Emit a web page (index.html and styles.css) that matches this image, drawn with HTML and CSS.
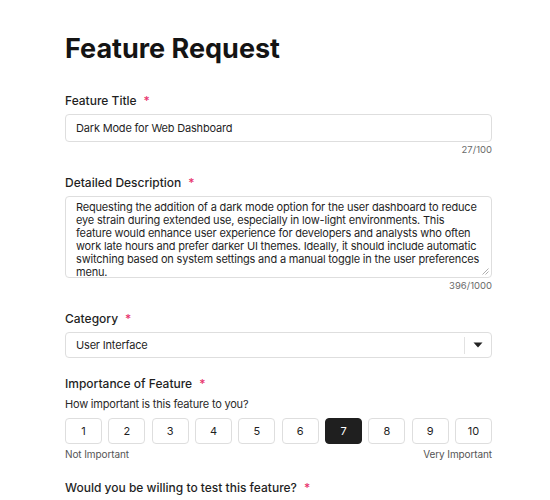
FILE: index.html
```html
<!DOCTYPE html>
<html lang="en">
<head>
<meta charset="utf-8">
<title>Feature Request</title>
<link rel="stylesheet" href="styles.css">
</head>
<body>
<main class="form">
  <h1 class="title">Feature Request</h1>

  <div class="field">
    <label class="label">Feature Title <span class="req">*</span></label>
    <div class="input">Dark Mode for Web Dashboard</div>
    <div class="count">27/100</div>
  </div>

  <div class="field">
    <label class="label">Detailed Description <span class="req">*</span></label>
    <div class="textarea">Requesting the addition of a dark mode option for the user dashboard to reduce eye strain during extended use, especially in low-light environments. This feature would enhance user experience for developers and analysts who often work late hours and prefer darker UI themes. Ideally, it should include automatic switching based on system settings and a manual toggle in the user preferences menu.<svg class="grip" width="7" height="7" viewBox="0 0 7 7"><path d="M6.5 0.5 L0.5 6.5 M6.5 3.5 L3.5 6.5" stroke="#9a9a9a" stroke-width="0.8" fill="none"/></svg></div>
    <div class="count">396/1000</div>
  </div>

  <div class="field">
    <label class="label">Category <span class="req">*</span></label>
    <div class="select">
      <span class="select-value">User Interface</span>
      <span class="select-sep"></span>
      <span class="select-arrow"><svg width="10" height="6" viewBox="0 0 10 6"><path d="M0.5 0.5 H9.5 L5 5.5 Z" fill="#222"/></svg></span>
    </div>
  </div>

  <div class="field">
    <label class="label">Importance of Feature <span class="req">*</span></label>
    <div class="hint">How important is this feature to you?</div>
    <div class="scale">
      <button class="opt">1</button>
      <button class="opt">2</button>
      <button class="opt">3</button>
      <button class="opt">4</button>
      <button class="opt">5</button>
      <button class="opt">6</button>
      <button class="opt active">7</button>
      <button class="opt">8</button>
      <button class="opt">9</button>
      <button class="opt">10</button>
    </div>
    <div class="scale-labels"><span>Not Important</span><span>Very Important</span></div>
  </div>

  <div class="field">
    <label class="label">Would you be willing to test this feature? <span class="req">*</span></label>
  </div>
</main>
</body>
</html>
```

FILE: styles.css
```css
* { box-sizing: border-box; }
html, body { margin: 0; padding: 0; background: #ffffff; }
body {
  font-family: Inter, "Noto Sans", sans-serif;
  color: #1c1c1c;
}
.form {
  width: 427px;
  margin-left: 65px;
  padding-top: 33px;
}
.title {
  font-size: 27px;
  font-weight: 700;
  letter-spacing: 0;
  line-height: 32px;
  margin: 0 0 28px 0;
  color: #141414;
}
.field { margin-bottom: 18px; }
.label {
  display: flex;
  align-items: center;
  gap: 7px;
  font-size: 12px;
  font-weight: 500;
  line-height: 16px;
  margin-bottom: 5px;
  color: #1f1f1f;
}
.req { color: #e8346e; font-size: 12px; }
.input, .textarea, .select {
  border: 1px solid #dedede;
  border-radius: 4px;
  background: #fff;
  font-size: 11px;
  letter-spacing: -0.18px;
  color: #1f1f1f;
}
.input {
  height: 28px;
  display: flex;
  align-items: center;
  padding: 0 10px;
}
.count {
  text-align: right;
  font-size: 9.5px;
  color: #6a6a6a;
  line-height: 14px;
  margin-top: 1px;
}
.textarea {
  position: relative;
  height: 82px;
  padding: 4px 10px;
  line-height: 13px;
  overflow: hidden;
}
.grip { position: absolute; right: 2px; bottom: 2px; }
.select {
  height: 26px;
  display: flex;
  align-items: center;
  padding-left: 10px;
}
.select-value { flex: 1; }
.select-sep { width: 1px; height: 17px; background: #e2e2e2; }
.select-arrow { width: 26px; display: flex; justify-content: center; }
.hint { font-size: 11px; letter-spacing: -0.2px; color: #2a2a2a; margin-top: 0; margin-bottom: 7px; line-height: 14px; }
.scale {
  display: grid;
  grid-template-columns: repeat(10, 1fr);
  gap: 6.5px;
}
.opt {
  height: 26px;
  border: 1px solid #dedede;
  border-radius: 4px;
  background: #fff;
  font-family: inherit;
  font-size: 11px;
  color: #1f1f1f;
  padding: 0;
}
.opt.active { background: #1f1f1f; border-color: #1f1f1f; color: #fff; }
.scale-labels {
  display: flex;
  justify-content: space-between;
  font-size: 10px;
  letter-spacing: -0.1px;
  color: #555;
  margin-top: 4px;
  line-height: 13px;
}
.field:last-child { margin-top: 19px; }
```
